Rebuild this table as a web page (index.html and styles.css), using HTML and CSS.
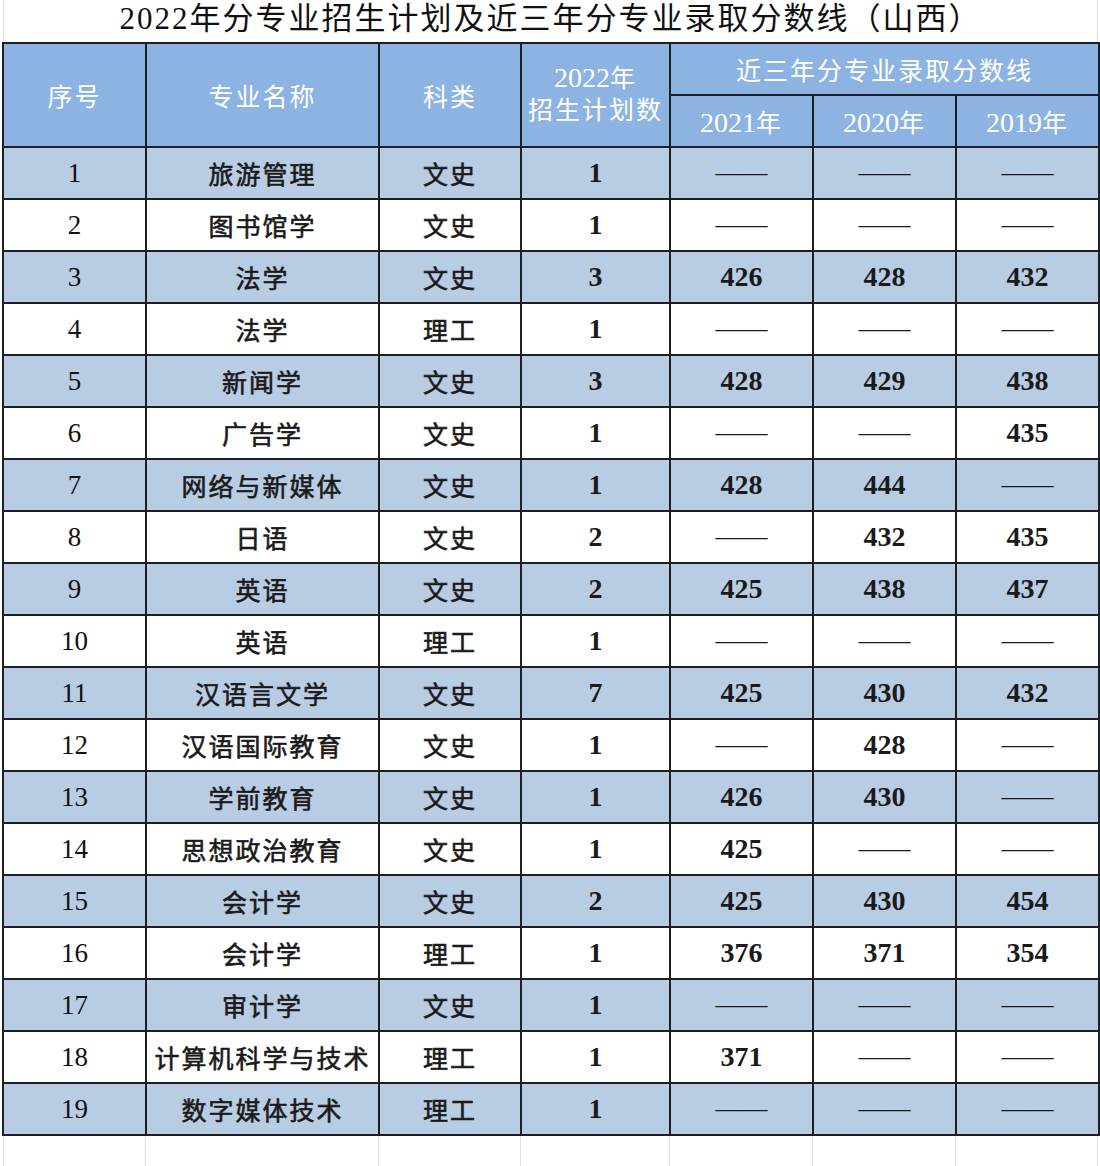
FILE: index.html
```html
<!DOCTYPE html>
<html lang="zh-CN">
<head>
<meta charset="utf-8">
<title>2022年分专业招生计划及近三年分专业录取分数线（山西）</title>
<link rel="stylesheet" href="styles.css">
</head>
<body>
<div class="page">
  <div class="title">2022年分专业招生计划及近三年分专业录取分数线（山西）</div>
  <table class="grid">
    <colgroup>
      <col class="c1"><col class="c2"><col class="c3"><col class="c4"><col class="c5"><col class="c6"><col class="c7">
    </colgroup>
    <thead>
      <tr>
        <th rowspan="2">序号</th>
        <th rowspan="2">专业名称</th>
        <th rowspan="2">科类</th>
        <th rowspan="2" class="two"><span class="num">2022</span>年<br>招生计划数</th>
        <th colspan="3">近三年分专业录取分数线</th>
      </tr>
      <tr>
        <th><span class="num">2021</span>年</th>
        <th><span class="num">2020</span>年</th>
        <th><span class="num">2019</span>年</th>
      </tr>
    </thead>
    <tbody>
      <tr class="odd"><td class="sn">1</td><td class="nm">旅游管理</td><td class="nm">文史</td><td class="sc">1</td><td class="sc d">——</td><td class="sc d">——</td><td class="sc d">——</td></tr>
      <tr><td class="sn">2</td><td class="nm">图书馆学</td><td class="nm">文史</td><td class="sc">1</td><td class="sc d">——</td><td class="sc d">——</td><td class="sc d">——</td></tr>
      <tr class="odd"><td class="sn">3</td><td class="nm">法学</td><td class="nm">文史</td><td class="sc">3</td><td class="sc">426</td><td class="sc">428</td><td class="sc">432</td></tr>
      <tr><td class="sn">4</td><td class="nm">法学</td><td class="nm">理工</td><td class="sc">1</td><td class="sc d">——</td><td class="sc d">——</td><td class="sc d">——</td></tr>
      <tr class="odd"><td class="sn">5</td><td class="nm">新闻学</td><td class="nm">文史</td><td class="sc">3</td><td class="sc">428</td><td class="sc">429</td><td class="sc">438</td></tr>
      <tr><td class="sn">6</td><td class="nm">广告学</td><td class="nm">文史</td><td class="sc">1</td><td class="sc d">——</td><td class="sc d">——</td><td class="sc">435</td></tr>
      <tr class="odd"><td class="sn">7</td><td class="nm">网络与新媒体</td><td class="nm">文史</td><td class="sc">1</td><td class="sc">428</td><td class="sc">444</td><td class="sc d">——</td></tr>
      <tr><td class="sn">8</td><td class="nm">日语</td><td class="nm">文史</td><td class="sc">2</td><td class="sc d">——</td><td class="sc">432</td><td class="sc">435</td></tr>
      <tr class="odd"><td class="sn">9</td><td class="nm">英语</td><td class="nm">文史</td><td class="sc">2</td><td class="sc">425</td><td class="sc">438</td><td class="sc">437</td></tr>
      <tr><td class="sn">10</td><td class="nm">英语</td><td class="nm">理工</td><td class="sc">1</td><td class="sc d">——</td><td class="sc d">——</td><td class="sc d">——</td></tr>
      <tr class="odd"><td class="sn">11</td><td class="nm">汉语言文学</td><td class="nm">文史</td><td class="sc">7</td><td class="sc">425</td><td class="sc">430</td><td class="sc">432</td></tr>
      <tr><td class="sn">12</td><td class="nm">汉语国际教育</td><td class="nm">文史</td><td class="sc">1</td><td class="sc d">——</td><td class="sc">428</td><td class="sc d">——</td></tr>
      <tr class="odd"><td class="sn">13</td><td class="nm">学前教育</td><td class="nm">文史</td><td class="sc">1</td><td class="sc">426</td><td class="sc">430</td><td class="sc d">——</td></tr>
      <tr><td class="sn">14</td><td class="nm">思想政治教育</td><td class="nm">文史</td><td class="sc">1</td><td class="sc">425</td><td class="sc d">——</td><td class="sc d">——</td></tr>
      <tr class="odd"><td class="sn">15</td><td class="nm">会计学</td><td class="nm">文史</td><td class="sc">2</td><td class="sc">425</td><td class="sc">430</td><td class="sc">454</td></tr>
      <tr><td class="sn">16</td><td class="nm">会计学</td><td class="nm">理工</td><td class="sc">1</td><td class="sc">376</td><td class="sc">371</td><td class="sc">354</td></tr>
      <tr class="odd"><td class="sn">17</td><td class="nm">审计学</td><td class="nm">文史</td><td class="sc">1</td><td class="sc d">——</td><td class="sc d">——</td><td class="sc d">——</td></tr>
      <tr><td class="sn">18</td><td class="nm">计算机科学与技术</td><td class="nm">理工</td><td class="sc">1</td><td class="sc">371</td><td class="sc d">——</td><td class="sc d">——</td></tr>
      <tr class="odd"><td class="sn">19</td><td class="nm">数字媒体技术</td><td class="nm">理工</td><td class="sc">1</td><td class="sc d">——</td><td class="sc d">——</td><td class="sc d">——</td></tr>
    </tbody>
  </table>
  <div class="tail">
    <div class="tc t1"></div><div class="tc t2"></div><div class="tc t3"></div><div class="tc t4"></div><div class="tc t5"></div><div class="tc t6"></div><div class="tc t7"></div>
  </div>
</div>
</body>
</html>
```

FILE: styles.css
```css
html, body {
  margin: 0;
  padding: 0;
  background: #ffffff;
}

.page {
  width: 1100px;
  height: 1166px;
  overflow: hidden;
  font-family: "Liberation Serif", "Noto Sans CJK SC", serif;
  color: #111111;
}

.title {
  height: 42px;
  line-height: 38px;
  margin-left: 3px;
  width: 1095px;
  border-left: 1px solid #e2e2e2;
  border-right: 1px solid #e2e2e2;
  box-sizing: border-box;
  text-align: center;
  font-size: 31px;
  letter-spacing: 2px;
  color: #111111;
}

.grid {
  border-collapse: collapse;
  table-layout: fixed;
  width: 1096px;
  margin-left: 2px;
}

.c1 { width: 143px; }
.c2 { width: 233px; }
.c3 { width: 142px; }
.c4 { width: 149px; }
.c5 { width: 143px; }
.c6 { width: 143px; }
.c7 { width: 143px; }

.grid th,
.grid td {
  border: 2px solid #1c1f26;
  padding: 0;
  text-align: center;
  vertical-align: middle;
  white-space: nowrap;
  overflow: hidden;
}

.grid thead tr {
  height: 52px;
}

.grid th {
  background: #8db3e2;
  color: #ffffff;
  font-weight: normal;
  font-size: 25px;
  letter-spacing: 2px;
}

.grid th .num {
  font-size: 28px;
  letter-spacing: 0;
}

.grid th.two {
  line-height: 32px;
  padding-bottom: 2px;
}

.grid tbody tr {
  height: 52px;
  background: #ffffff;
}

.grid tbody tr.odd {
  background: #b8cce4;
}

.sn {
  font-size: 27px;
  font-weight: normal;
}

.nm {
  font-size: 25px;
  letter-spacing: 2px;
  font-weight: normal;
  -webkit-text-stroke: 0.6px #1a1a1a;
  color: #1a1a1a;
  padding-bottom: 4px;
}

.sc {
  font-size: 28px;
  font-weight: bold;
  color: #1a1a1a;
}

.sc.d {
  font-size: 26px;
  font-weight: normal;
}

.tail {
  display: grid;
  grid-template-columns: 143px 233px 142px 149px 143px 143px 142px;
  margin-left: 3px;
  height: 40px;
}

.tc {
  border-right: 1px solid #e0e0e0;
}

.t1 {
  border-left: 1px solid #e0e0e0;
}
```
